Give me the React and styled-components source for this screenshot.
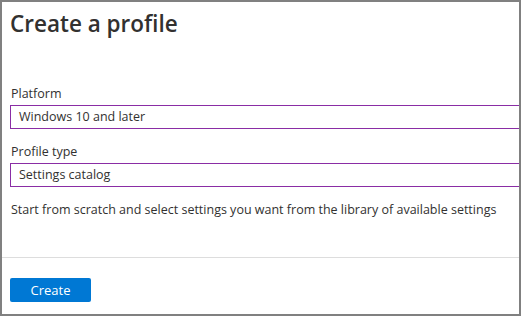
import React from "react";
import styled, { createGlobalStyle } from "styled-components";

const GlobalStyle = createGlobalStyle`
  html, body {
    margin: 0;
    padding: 0;
    background: #ffffff;
  }
  body {
    font-family: "Open Sans", "Noto Sans", "Liberation Sans", sans-serif;
    color: #323130;
  }
`;

const fields = [
  { label: "Platform", value: "Windows 10 and later" },
  { label: "Profile type", value: "Settings catalog" },
];

export default function App() {
  return (
    <>
      <GlobalStyle />
      <Frame>
        <Body>
          <Title>Create a profile</Title>
          <Form>
            {fields.map((f) => (
              <Field key={f.label}>
                <Label>{f.label}</Label>
                <Select>{f.value}</Select>
              </Field>
            ))}
            <Description>
              Start from scratch and select settings you want from the library of available settings
            </Description>
          </Form>
        </Body>
        <Footer>
          <PrimaryButton>Create</PrimaryButton>
        </Footer>
      </Frame>
    </>
  );
}

const Frame = styled.div`
  width: 521px;
  height: 316px;
  box-sizing: border-box;
  border: 2px solid #808080;
  overflow: hidden;
  display: flex;
  flex-direction: column;
  background: #ffffff;
`;

const Body = styled.div`
  flex: 1;
  padding: 6px 0 0 8px;
  display: flex;
  flex-direction: column;
`;

const Title = styled.h1`
  margin: 0;
  font-size: 22.5px;
  font-weight: 600;
  line-height: 32px;
  color: #323130;
`;

const Form = styled.div`
  margin-top: 45px;
  display: flex;
  flex-direction: column;
`;

const Field = styled.div`
  display: flex;
  flex-direction: column;
  margin-bottom: 14px;
`;

const Label = styled.div`
  font-size: 12.5px;
  line-height: 18px;
  margin-bottom: 2px;
  padding-left: 1px;
`;

const Select = styled.div`
  width: 540px;
  height: 24px;
  box-sizing: border-box;
  border: 1px solid #8a2da5;
  padding-left: 8px;
  font-size: 12.5px;
  line-height: 22px;
  color: #323130;
`;

const Description = styled.p`
  margin: 0 0 0 1px;
  font-size: 12.5px;
  line-height: 18px;
`;

const Footer = styled.div`
  height: 57px;
  border-top: 1px solid #dddddd;
  padding: 20px 0 0 8px;
  box-sizing: border-box;
`;

const PrimaryButton = styled.button`
  width: 81px;
  height: 24px;
  border: none;
  border-radius: 2px;
  background: #0078d4;
  color: #ffffff;
  font-family: inherit;
  font-size: 13px;
  padding: 0;
  cursor: pointer;
`;
